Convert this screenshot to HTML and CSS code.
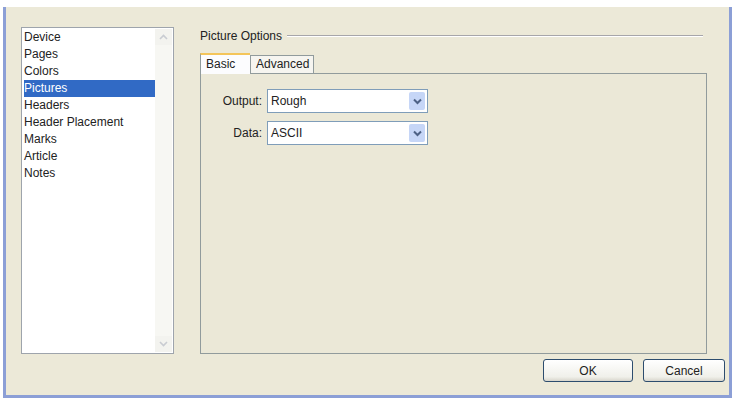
FILE: index.html
```html
<!DOCTYPE html>
<html>
<head>
<meta charset="utf-8">
<link rel="stylesheet" href="styles.css">
</head>
<body>
<div class="window">
  <div class="main">
    <div class="listbox">
      <ul class="items">
        <li>Device</li>
        <li>Pages</li>
        <li>Colors</li>
        <li class="sel">Pictures</li>
        <li>Headers</li>
        <li>Header Placement</li>
        <li>Marks</li>
        <li>Article</li>
        <li>Notes</li>
      </ul>
      <div class="vscroll">
        <div class="sbtn"><svg width="9" height="6" viewBox="0 0 9 6"><path d="M1 5 L4.5 1.5 L8 5" fill="none" stroke="#c9ccd2" stroke-width="1.6"/></svg></div>
        <div class="strack"></div>
        <div class="sbtn"><svg width="9" height="6" viewBox="0 0 9 6"><path d="M1 1 L4.5 4.5 L8 1" fill="none" stroke="#c9ccd2" stroke-width="1.6"/></svg></div>
      </div>
    </div>
    <div class="options">
      <div class="group-title"><span>Picture Options</span><div class="rule"></div></div>
      <div class="tabs">
        <div class="tab active">Basic</div>
        <div class="tab">Advanced</div>
      </div>
      <div class="panel">
        <div class="field">
          <label class="lbl">Output:</label>
          <div class="combo"><span class="val">Rough</span><span class="drop"><svg width="9" height="7" viewBox="0 0 9 7"><path d="M1 1.5 L4.5 5 L8 1.5" fill="none" stroke="#4d6185" stroke-width="2"/></svg></span></div>
        </div>
        <div class="field">
          <label class="lbl">Data:</label>
          <div class="combo"><span class="val">ASCII</span><span class="drop"><svg width="9" height="7" viewBox="0 0 9 7"><path d="M1 1.5 L4.5 5 L8 1.5" fill="none" stroke="#4d6185" stroke-width="2"/></svg></span></div>
        </div>
      </div>
    </div>
  </div>
  <div class="buttons">
    <button class="btn ok">OK</button>
    <button class="btn cancel">Cancel</button>
  </div>
</div>
</body>
</html>
```

FILE: styles.css
```css
html, body {
  margin: 0;
  padding: 0;
  background: #ffffff;
}
body {
  font-family: "Liberation Sans", Arial, sans-serif;
  font-size: 12px;
  color: #222;
  width: 734px;
  height: 398px;
  overflow: hidden;
}
.window {
  box-sizing: border-box;
  margin: 7px 0 0 3px;
  width: 729px;
  height: 391px;
  background: #ece9d8;
  border-left: 3px solid #8c9fd6;
  border-right: 3px solid #8c9fd6;
  border-bottom: 3px solid #8c9fd6;
  padding: 20px 0 0 15px;
  display: flex;
  flex-direction: column;
}
.main {
  display: flex;
  gap: 26px;
  height: 327px;
}
.listbox {
  box-sizing: border-box;
  width: 153px;
  height: 327px;
  border: 1px solid #9ea4ac;
  background: #fff;
  display: flex;
  padding: 1px 1px 1px 2px;
}
.items {
  list-style: none;
  margin: 0;
  padding: 0;
  flex: 1;
}
.items li {
  height: 17px;
  line-height: 17px;
  padding-left: 0;
  white-space: nowrap;
}
.items li.sel {
  background: #316ac5;
  color: #fff;
}
.vscroll {
  width: 17px;
  display: flex;
  flex-direction: column;
  background: #f7f7f3;
}
.sbtn {
  height: 16px;
  display: flex;
  align-items: center;
  justify-content: center;
  background: #f3f3ef;
}
.strack {
  flex: 1;
}
.options {
  width: 507px;
  display: flex;
  flex-direction: column;
}
.group-title {
  display: flex;
  align-items: center;
  gap: 5px;
  height: 18px;
}
.group-title span {
  white-space: nowrap;
}
.rule {
  flex: 1;
  height: 0;
  border-top: 1px solid #a7a6aa;
  border-bottom: 1px solid #fff;
  margin-right: 4px;
}
.tabs {
  display: flex;
  align-items: flex-end;
  margin-top: 7px;
  height: 21px;
}
.tab {
  box-sizing: border-box;
  height: 18px;
  line-height: 16px;
  padding: 0 5px;
  border: 1px solid #919b9c;
  border-bottom: none;
  background: #f6f5f0;
}
.tab.active {
  width: 50px;
  height: 21px;
  line-height: 19px;
  background: #fcfcfe;
  border-top: 2px solid #f4c55a;
  border-right: none;
  position: relative;
  z-index: 1;
  margin-bottom: -1px;
}
.tab:not(.active) {
  width: 64px;
}
.panel {
  box-sizing: border-box;
  flex: 1;
  border: 1px solid #919b9c;
  background: #ebe8d7;
  padding: 15px 0 0 0;
  display: flex;
  flex-direction: column;
  gap: 8px;
}
.field {
  display: flex;
  align-items: center;
  height: 24px;
}
.lbl {
  width: 61px;
  text-align: right;
  padding-right: 5px;
}
.combo {
  box-sizing: border-box;
  width: 161px;
  height: 24px;
  border: 1px solid #7f9db9;
  background: #fff;
  display: flex;
  align-items: center;
  padding: 2px;
}
.val {
  flex: 1;
  padding-left: 1px;
}
.drop {
  width: 16px;
  height: 18px;
  background: #c6d6f7;
  border-radius: 2px;
  display: flex;
  align-items: center;
  justify-content: center;
}
.buttons {
  display: flex;
  justify-content: flex-end;
  gap: 10px;
  margin-top: 5px;
  padding-right: 4px;
}
.btn {
  box-sizing: border-box;
  height: 23px;
  font-family: "Liberation Sans", Arial, sans-serif;
  font-size: 12px;
  color: #222;
  border: 1px solid #2d4d6e;
  border-radius: 3px;
  background: linear-gradient(#ffffff, #f0f0ea 80%, #d8d6cc);
  padding: 0;
}
.ok { width: 90px; }
.cancel { width: 82px; }
```
